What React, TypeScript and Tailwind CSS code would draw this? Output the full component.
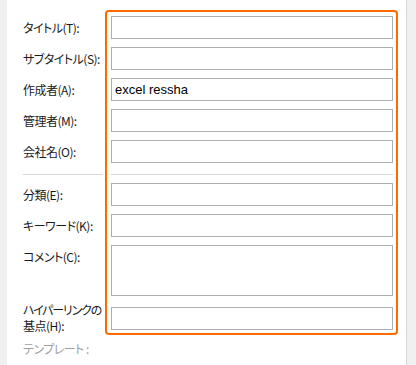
import React from "react";

type Field = {
  label: string;
  value?: string;
  tall?: boolean;
  twoLine?: boolean;
};

const topFields: Field[] = [
  { label: "タイトル(T):" },
  { label: "サブタイトル(S):" },
  { label: "作成者(A):", value: "excel ressha" },
  { label: "管理者(M):" },
  { label: "会社名(O):" },
];

const bottomFields: Field[] = [
  { label: "分類(E):" },
  { label: "キーワード(K):" },
  { label: "コメント(C):", tall: true },
  { label: "ハイパーリンクの基点(H):", twoLine: true },
];

const labelFont =
  "font-['Noto_Sans_CJK_JP','Noto_Sans',sans-serif] [font-feature-settings:'palt'] text-[12px] tracking-[-0.5px] text-[#1a1a1a]";

function Label(props: { field: Field }) {
  const f = props.field;
  if (f.twoLine) {
    // two-line label sits a little above its input
    return (
      <div className="mt-[6px] flex flex-col leading-[16px] whitespace-nowrap">
        <div className="tracking-[-1.2px]">ハイパーリンクの</div>
        <div>基点(H):</div>
      </div>
    );
  }
  return (
    <div className={f.tall ? "h-[51px]" : "h-[23px]"}>
      <div className="h-[23px] flex items-center whitespace-nowrap">{f.label}</div>
    </div>
  );
}

function Input(props: { field: Field }) {
  const f = props.field;
  return (
    <div
      className={
        "w-full border border-[#abadb3] bg-white flex items-center px-[3px] font-['Liberation_Sans',Arial,sans-serif] text-[13px] text-black " +
        (f.tall ? "h-[51px]" : "h-[23px]") +
        (f.twoLine ? " mt-[11px]" : "")
      }
    >
      {f.value}
    </div>
  );
}

export default function App() {
  return (
    <div className="w-[416px] h-[365px] flex bg-white overflow-hidden">
      {/* left window edge */}
      <div className="w-[7px] bg-[#f0f0f0] shrink-0" />

      <div className="flex-1 flex flex-col pt-[10px] pl-[16px] pr-[8px]">
        <div className="flex">
          {/* labels */}
          <div className={"w-[82px] shrink-0 flex flex-col pt-[6px] " + labelFont}>
            <div className="flex flex-col gap-[8px]">
              {topFields.map((f) => (
                <Label key={f.label} field={f} />
              ))}
            </div>
            <div className="h-px bg-[#d9d9d9] mt-[11px] mb-[8px] mr-[2px]" />
            <div className="flex flex-col gap-[8px]">
              {bottomFields.slice(0, 3).map((f) => (
                <Label key={f.label} field={f} />
              ))}
            </div>
            <Label field={bottomFields[3]} />
          </div>

          {/* highlighted inputs */}
          <div className="flex-1 border-2 border-[#ff6a00] rounded-[4px] pl-[4px] pr-[3px] pt-[4px] pb-[3px] bg-white">
            <div className="flex flex-col gap-[8px]">
              {topFields.map((f) => (
                <Input key={f.label} field={f} />
              ))}
            </div>
            <div className="h-px bg-[#d9d9d9] mt-[11px] mb-[8px]" />
            <div className="flex flex-col gap-[8px]">
              {bottomFields.slice(0, 3).map((f) => (
                <Input key={f.label} field={f} />
              ))}
            </div>
            <Input field={bottomFields[3]} />
          </div>
        </div>

        <div className={labelFont + " text-[#a0a0a0] mt-[6px] leading-[16px]"}>
          テンプレート :
        </div>
      </div>

      {/* right window edge */}
      <div className="w-[10px] bg-[#f0f0f0] border-l border-[#d9d9d9] shrink-0" />
    </div>
  );
}
